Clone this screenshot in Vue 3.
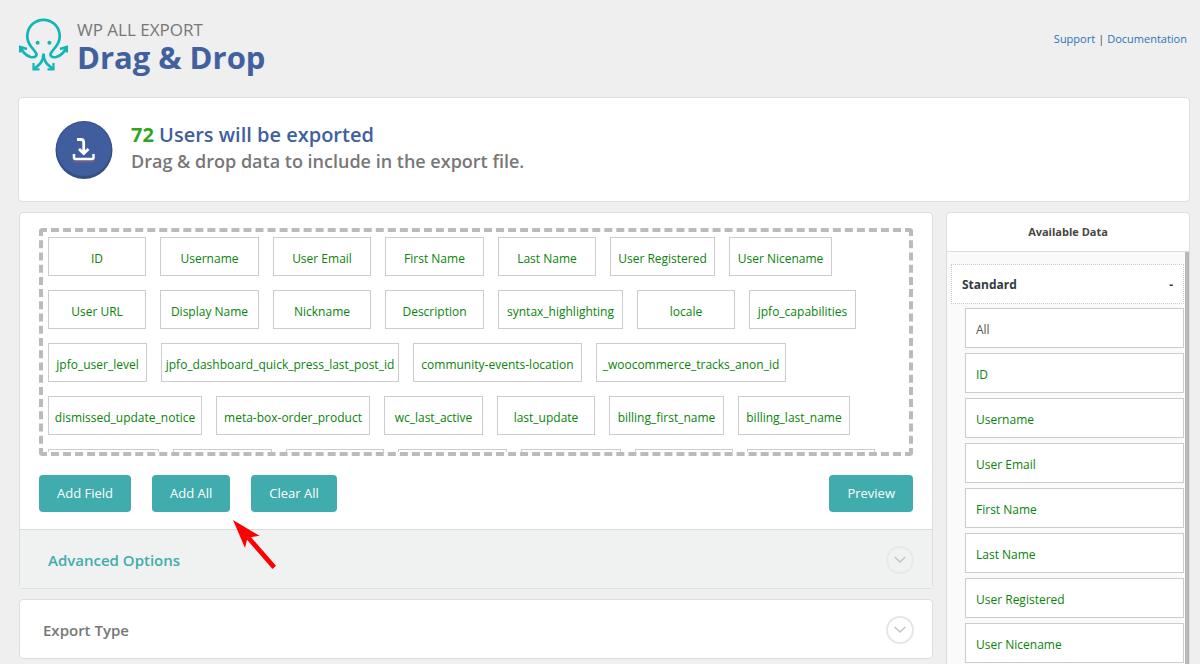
<script setup>
import { ref } from 'vue'

const fields = ref([
  { name: 'ID', width: 98 },
  { name: 'Username', width: 99 },
  { name: 'User Email', width: 98 },
  { name: 'First Name', width: 99 },
  { name: 'Last Name', width: 98 },
  { name: 'User Registered', width: 105 },
  { name: 'User Nicename', width: 103 },
  { name: 'User URL', width: 98 },
  { name: 'Display Name', width: 99 },
  { name: 'Nickname', width: 98 },
  { name: 'Description', width: 99 },
  { name: 'syntax_highlighting', width: 125 },
  { name: 'locale', width: 98 },
  { name: 'jpfo_capabilities', width: 107 },
  { name: 'jpfo_user_level', width: 99 },
  { name: 'jpfo_dashboard_quick_press_last_post_id', width: 238 },
  { name: 'community-events-location', width: 169 },
  { name: '_woocommerce_tracks_anon_id', width: 190 },
  { name: 'dismissed_update_notice', width: 154 },
  { name: 'meta-box-order_product', width: 154 },
  { name: 'wc_last_active', width: 99 },
  { name: 'last_update', width: 98 },
  { name: 'billing_first_name', width: 115 },
  { name: 'billing_last_name', width: 112 },
])
const nextRow = [111, 99, 98, 109, 100, 98, 128]
const available = [
  'ID', 'Username', 'User Email', 'First Name', 'Last Name', 'User Registered', 'User Nicename',
]
</script>

<template>
  <div class="page">
    <header class="top">
      <svg class="logo" width="50" height="54" viewBox="0 0 50 54" fill="none" stroke="#12b5b8" stroke-width="2.7">
        <path d="M1.500 29.500 C4 34 6 37.300 11.700 39 C16.500 40 18.500 37.500 17 35 C15.500 32.500 13 30 11 27 A16.200 16.200 0 1 1 38 27 C36 30 33.500 32.500 32 35 C30.500 37.500 32.500 40 37.300 39 C43 37.300 45 34 47.500 29.500" />
        <path d="M1.200 34.500 V29 L8 31 M47.800 34.500 V29 L41 31" stroke-width="2.500" />
        <path d="M24.500 35.500 C24.500 43 21.500 46 15 50.800 M24.500 35.500 C24.500 43 27.500 46 34 50.800" />
        <path d="M14.500 45 V51.300 H20.500 M34.500 45 V51.300 H28.500" stroke-width="2.200" />
        <circle cx="18.600" cy="24.700" r="2" fill="#12b5b8" stroke="none" />
        <circle cx="30.400" cy="24.700" r="2" fill="#12b5b8" stroke="none" />
      </svg>
      <div class="brand">
        <p>WP ALL EXPORT</p>
        <h1>Drag &amp; Drop</h1>
      </div>
      <nav class="links"><a href="#support">Support</a><span>|</span><a href="#docs">Documentation</a></nav>
    </header>

    <section class="card notice">
      <svg width="58" height="60" viewBox="0 0 58 60" fill="none">
        <ellipse cx="29" cy="30" rx="28.500" ry="29" fill="#334f86" />
        <ellipse cx="29" cy="29" rx="27.300" ry="27" fill="#405e9e" />
        <path d="M19 37 V40 Q19 41.500 20.500 41.500 H37 Q38.500 41.500 38.500 40 V37" stroke="#6b5c8c" stroke-width="2.500" />
        <path d="M19 34 V37.500 Q19 39 20.500 39 H37 Q38.500 39 38.500 37.500 V34" stroke="#fff" stroke-width="2.500" />
        <path d="M22 19.500 H26 Q28.700 19.500 28.700 22.500 V32" stroke="#fff" stroke-width="2.800" />
        <path d="M24 29 L28.700 33.500 L33.500 29" stroke="#fff" stroke-width="2.800" />
      </svg>
      <div class="message">
        <h2><b>72</b> Users will be exported</h2>
        <h3>Drag &amp; drop data to include in the export file.</h3>
      </div>
    </section>

    <div class="columns">
      <main class="main">
        <section class="card">
          <div class="builder">
            <ul class="drop">
              <li v-for="f in fields" :key="f.name" class="chip" :style="{ width: f.width + 'px' }">{{ f.name }}</li>
              <li v-for="(w, i) in nextRow" :key="i" class="chip" :style="{ width: w + 'px' }" aria-hidden="true"></li>
            </ul>
            <div class="actions">
              <button type="button">Add Field</button>
              <span class="pointed">
                <button type="button">Add All</button>
                <svg class="arrow" width="44" height="50" viewBox="0 0 44 50" fill="#f00">
                  <polygon points="0,0 26.500,15.700 18,17.200 43,45.700 39.500,49 14,19.800 12,28" />
                </svg>
              </span>
              <button type="button">Clear All</button>
              <button type="button" class="preview">Preview</button>
            </div>
          </div>
          <div class="fold advanced">
            <h4>Advanced Options</h4>
            <button type="button" class="toggle" aria-label="Expand advanced options">
              <svg width="12" height="8" viewBox="0 0 12 8" fill="none" stroke="#c4c6c6" stroke-width="1.600"><path d="M.7 1 L6 6 L11.300 1" /></svg>
            </button>
          </div>
        </section>

        <section class="card fold type">
          <h4>Export Type</h4>
          <button type="button" class="toggle" aria-label="Expand export type">
            <svg width="12" height="8" viewBox="0 0 12 8" fill="none" stroke="#c4c6c6" stroke-width="1.600"><path d="M.7 1 L6 6 L11.300 1" /></svg>
          </button>
        </section>
      </main>

      <aside class="card side">
        <h5>Available Data</h5>
        <div class="list">
          <button type="button" class="group"><span>Standard</span><span>-</span></button>
          <ul>
            <li class="all">All</li>
            <li v-for="a in available" :key="a">{{ a }}</li>
          </ul>
        </div>
      </aside>
    </div>
  </div>
</template>

<style>
body { margin: 0; background: #efefef; }
</style>

<style scoped>
* { box-sizing: border-box; }
h1, h2, h3, h4, h5, p, ul { margin: 0; padding: 0; }
ul { list-style: none; }
button { font: inherit; cursor: pointer; }
.page {
  display: flex;
  flex-direction: column;
  height: 100vh;
  overflow: hidden;
  padding: 0 10px 0 18px;
  font: 12px/18px "Open Sans", "Noto Sans", sans-serif;
  color: #464646;
}
.top { display: flex; align-items: flex-start; height: 97px; flex: none; padding-top: 18px; }
.logo { margin-left: 1px; }
.brand { margin-left: 8px; color: #777; }
.brand p { font-size: 17px; line-height: 24px; }
.brand h1 { font-size: 31px; line-height: 30px; font-weight: 700; color: #40609f; }
.links { display: flex; gap: 3px; margin: 12px 3px 0 auto; font-size: 11px; }
.links a { color: #2a74b5; text-decoration: none; }
.card { background: #fff; border: 1px solid #ddd; border-radius: 4px; }
.notice { display: flex; align-items: center; gap: 18px; height: 105px; flex: none; padding-left: 36px; }
.message { padding-bottom: 3px; }
h2 { font-size: 20px; line-height: 26px; font-weight: 600; color: #40609f; }
h2 b { color: #2ea51f; font-weight: 700; }
h3 { font-size: 18px; line-height: 26px; font-weight: 600; color: #777; }
.columns { display: flex; gap: 13px; flex: 1; min-height: 0; margin-top: 10px; }
.main { flex: 1; min-width: 0; padding-left: 1px; display: flex; flex-direction: column; gap: 10px; }
.builder { padding: 15px 19px 17px; }
.drop {
  display: flex; flex-wrap: wrap; align-content: flex-start; gap: 14px;
  height: 228px; overflow: hidden; padding: 5px; border: 4px dashed #bbb; border-radius: 4px;
}
.chip {
  display: flex; justify-content: center; height: 39px; padding-top: 2px; border: 1px solid #ccc;
  line-height: 37px; color: #0a830a; white-space: nowrap;
}
.actions { display: flex; gap: 21px; margin-top: 19px; }
.actions button {
  height: 37px; padding: 0 18px 2px; border: 0; border-radius: 4px;
  background: #40acad; color: #fff; font-size: 13px;
}
.pointed { position: relative; }
.arrow { position: absolute; left: 81px; top: 45px; }
.actions .preview { margin-left: auto; }
.fold { display: flex; align-items: center; justify-content: space-between; height: 60px; padding: 1px 18px 0 23px; }
.advanced { height: 59px; padding-left: 28px; border-top: 1px solid #d8dcda; background: #f0f2f1; }
h4 { font-size: 15px; line-height: 24px; font-weight: 600; color: #777; }
.advanced h4 { color: #40acad; }
.toggle {
  display: flex; align-items: center; justify-content: center;
  width: 28px; height: 28px; padding: 0; border: 2px solid #e6e6e6; border-radius: 50%; background: transparent;
}
.advanced .toggle { border-color: #e7e9e8; }
.side { width: 244px; flex: none; display: flex; flex-direction: column; overflow: hidden; border-bottom: 0; border-radius: 4px 4px 0 0; }
h5 { font-size: 11px; line-height: 38px; font-weight: 700; text-align: center; border-bottom: 1px solid #ddd; }
.list { flex: 1; overflow: hidden; padding: 12px 1px 0 4px; border-right: 4px solid #b8b8b8; background: #fafafa; }
.group {
  display: flex; justify-content: space-between; align-items: center; width: 100%; height: 40px; padding: 2px 10px 0;
  border: 1px dotted #ccc; background: #fff; color: #333a42; font-weight: 700;
}
.list ul { display: flex; flex-direction: column; gap: 5px; margin: 4px 0 0 14px; }
.list li { height: 40px; padding: 2px 10px 0; border: 1px solid #ccc; line-height: 38px; background: #fff; color: #0a830a; }
.list .all { color: #555; }
</style>
